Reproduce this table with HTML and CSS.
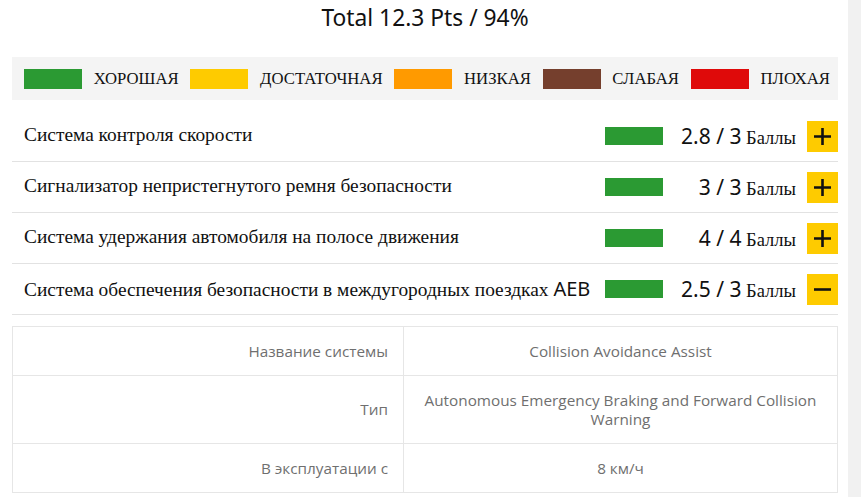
FILE: index.html
```html
<!DOCTYPE html>
<html lang="ru">
<head>
<meta charset="utf-8">
<link rel="stylesheet" href="styles.css">
</head>
<body>
<div class="shell">
  <main class="page">
    <h1 class="total">Total 12.3 Pts / 94%</h1>
    <div class="legend">
      <span class="sw green"></span><span class="lbl">ХОРОШАЯ</span>
      <span class="sw yellow"></span><span class="lbl">ДОСТАТОЧНАЯ</span>
      <span class="sw orange"></span><span class="lbl">НИЗКАЯ</span>
      <span class="sw brown"></span><span class="lbl">СЛАБАЯ</span>
      <span class="sw red"></span><span class="lbl">ПЛОХАЯ</span>
    </div>
    <ul class="rows">
      <li class="row">
        <span class="name">Система контроля скорости</span>
        <span class="bar green"></span>
        <span class="score"><span class="num">2.8 / 3</span> Баллы</span>
        <span class="btn"><svg viewBox="0 0 31 31" width="31" height="31"><path d="M7 15.5H24M15.5 7V24" stroke="#111" stroke-width="2.6"/></svg></span>
      </li>
      <li class="row">
        <span class="name">Сигнализатор непристегнутого ремня безопасности</span>
        <span class="bar green"></span>
        <span class="score"><span class="num">3 / 3</span> Баллы</span>
        <span class="btn"><svg viewBox="0 0 31 31" width="31" height="31"><path d="M7 15.5H24M15.5 7V24" stroke="#111" stroke-width="2.6"/></svg></span>
      </li>
      <li class="row">
        <span class="name">Система удержания автомобиля на полосе движения</span>
        <span class="bar green"></span>
        <span class="score"><span class="num">4 / 4</span> Баллы</span>
        <span class="btn"><svg viewBox="0 0 31 31" width="31" height="31"><path d="M7 15.5H24M15.5 7V24" stroke="#111" stroke-width="2.6"/></svg></span>
      </li>
      <li class="row">
        <span class="name">Система обеспечения безопасности в междугородных поездках <span class="sans">AEB</span></span>
        <span class="bar green"></span>
        <span class="score"><span class="num">2.5 / 3</span> Баллы</span>
        <span class="btn"><svg viewBox="0 0 31 31" width="31" height="31"><path d="M7 15.5H24" stroke="#111" stroke-width="2.6"/></svg></span>
      </li>
    </ul>
    <table class="info">
      <tr><td class="k">Название системы</td><td class="v">Collision Avoidance Assist</td></tr>
      <tr class="tall"><td class="k">Тип</td><td class="v">Autonomous Emergency Braking and Forward Collision Warning</td></tr>
      <tr><td class="k">В эксплуатации с</td><td class="v">8 км/ч</td></tr>
    </table>
  </main>
  <div class="track"></div>
</div>
</body>
</html>
```
FILE: styles.css
```css
html, body { margin: 0; padding: 0; background: #fff; }
body { width: 861px; height: 497px; overflow: hidden; }
.shell { display: flex; height: 497px; }
.page { flex: 1; padding: 0 10px 0 12px; }
.track { width: 13px; background: #f1f1f1; }

.total {
  margin: 0;
  padding-top: 4px;
  height: 51px;
  box-sizing: border-box;
  text-align: center;
  font-family: "Noto Sans", sans-serif;
  font-weight: 400;
  font-size: 22.8px;
  line-height: 28px;
  color: #111;
}

.legend {
  display: flex;
  align-items: center;
  justify-content: space-between;
  height: 43px;
  background: #f4f4f4;
  padding: 0 8px 0 12px;
  margin-top: 6px;
}
.sw { width: 58px; height: 20px; display: block; }
.lbl { font-family: "Liberation Serif", serif; font-size: 16.7px; color: #111; }

.green { background: #2b9a33; }
.yellow { background: #fecb00; }
.orange { background: #ff9a00; }
.brown { background: #753f2d; }
.red { background: #df0a0a; }

.rows { list-style: none; margin: 11px 0 0; padding: 0; }
.row {
  display: flex;
  align-items: center;
  height: 50px;
  border-bottom: 1px solid #e2e2e2;
  padding-left: 12px;
}
.name {
  flex: 1;
  font-family: "Liberation Serif", serif;
  font-size: 19.4px;
  color: #111;
  padding-bottom: 2px;
}
.sans { font-family: "Noto Sans", sans-serif; font-size: 20px; }
.bar { width: 58px; height: 18px; display: block; }
.score {
  width: 123px;
  margin-left: 10px;
  text-align: right;
  font-family: "Liberation Serif", serif;
  font-size: 18.5px;
  color: #111;
  white-space: nowrap;
}
.num { font-family: "Noto Sans", sans-serif; font-size: 21px; }
.btn {
  width: 31px; height: 31px; margin-left: 11px;
  background: #fecb00;
  display: block;
}
.btn svg { display: block; }

.info {
  margin-top: 11px;
  width: 100%;
  border-collapse: collapse;
  font-family: "Open Sans", sans-serif;
  font-size: 15.3px;
  color: #6f6f6f;
}
.info td { border: 1px solid #e6e6e6; height: 48px; padding: 0 15px; line-height: 19px; }
.info tr.tall td { height: 67px; }
.info .k { width: 360px; text-align: right; }
.info .v { text-align: center; padding: 0 18px; }
```
